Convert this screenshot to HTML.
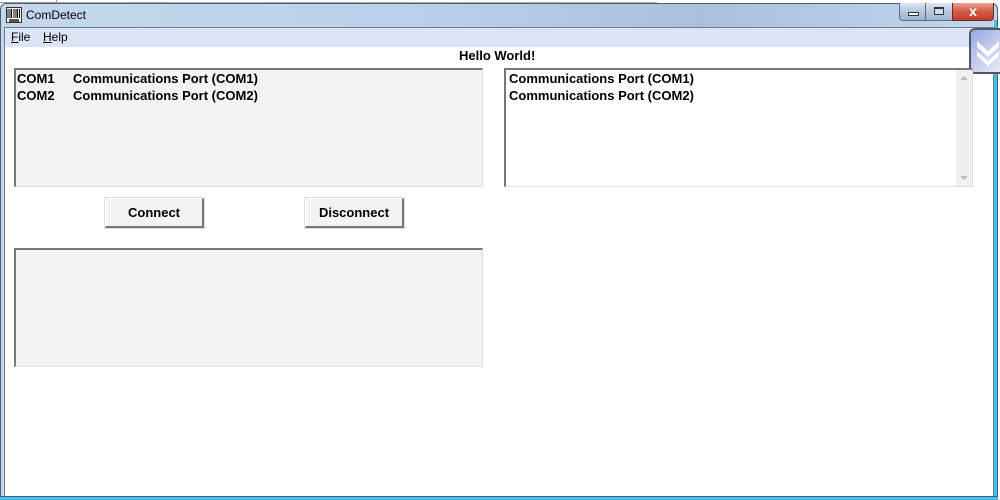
<!DOCTYPE html>
<html><head><meta charset="utf-8"><style>
*{margin:0;padding:0;box-sizing:border-box}
body{width:1000px;height:500px;overflow:hidden;background:#fff;position:relative;font-family:"Liberation Sans",Arial,sans-serif}
.abs{position:absolute}
.b{font-weight:bold;font-size:13px;color:#000}
</style></head><body>
<div class="abs" style="left:0;top:0;width:1000px;height:4px;background:#fff"></div>
<div class="abs" style="left:0;top:0;width:57px;height:3px;border-right:1px solid #999;border-bottom:1px solid #999"></div>
<div class="abs" style="left:57px;top:0;width:600px;height:3px;border-bottom:1px solid #aaa"></div>
<div class="abs" style="left:0;top:3px;width:998px;height:497px;background:linear-gradient(90deg,#c4d7ec,#bcd2ea 40%,#a9c1dc 70%,#c2d6ec);border:1px solid #4e5e70;border-radius:6px 6px 0 0"></div>
<div class="abs" style="left:994px;top:20px;width:3px;height:480px;background:#3cc3ec"></div>
<div class="abs" style="left:0;top:496px;width:998px;height:4px;background:#3cc3ec;border-top:1px solid #556"></div>
<svg class="abs" style="left:6px;top:7px" width="16" height="16" viewBox="0 0 16 16"><rect x="0.5" y="0.5" width="15" height="15" fill="#fff" stroke="#333"/><g stroke="#000"><path d="M2 2v9M4 2v9M5.5 2v9M8 2v9M10 2v9M11.5 2v9M13.5 2v9"/></g><rect x="3" y="12" width="10" height="3" fill="#555"/></svg>
<div class="abs" style="left:26px;top:8px;font-size:12px;color:#000">ComDetect</div>
<div class="abs" style="left:899px;top:3px;width:54px;height:18px;border:1px solid #5a6a80;border-top:none;border-radius:0 0 0 4px;background:linear-gradient(#dce6f2,#b6c8de 50%,#9fb5d0)"></div>
<div class="abs" style="left:925px;top:3px;width:1px;height:18px;background:#5a6a80"></div>
<div class="abs" style="left:908px;top:12px;width:11px;height:4px;border:1px solid #334;background:#fff"></div>
<div class="abs" style="left:934px;top:7px;width:10px;height:8px;border:1px solid #334;border-top-width:2px;background:#cde"></div>
<div class="abs" style="left:952px;top:3px;width:42px;height:18px;border:1px solid #6a2a20;border-top:none;border-radius:0 0 4px 0;background:linear-gradient(#e8a090,#d25a44 50%,#c0402a);color:#fff;font-weight:bold;font-size:14px;text-align:center;line-height:16px">x</div>
<div class="abs" style="left:4px;top:27px;width:990px;height:469px;background:#fff;border:1px solid #6e7c8c;border-bottom:none"></div>
<div class="abs" style="left:5px;top:28px;width:989px;height:19px;background:#dce5f5"></div>
<div class="abs" style="left:11px;top:30px;font-size:12px"><u>F</u>ile</div>
<div class="abs" style="left:43px;top:30px;font-size:12px"><u>H</u>elp</div>
<div class="abs" style="left:969px;top:28px;width:31px;height:46px;border:2px solid #556;border-right:none;border-radius:6px 0 0 6px;background:linear-gradient(135deg,#9aa8e0,#e8ecf8);"></div>
<svg class="abs" style="left:977px;top:37px" width="23" height="30"><path d="M0 4l11 10 11-10v6l-11 10-11-10z M0 14l11 10 11-10v5l-11 10-11-10z" fill="#fff" opacity=".9"/></svg>
<div class="abs b" style="left:459px;top:48px">Hello World!</div>
<div class="abs" style="left:14px;top:68px;width:469px;height:119px;background:#f3f3f3;border:1px solid #e0e0e0;border-top:2px solid #777;border-left:2px solid #777"></div>
<div class="abs b" style="left:17px;top:71px;line-height:16.5px">COM1<br>COM2</div>
<div class="abs b" style="left:73px;top:71px;line-height:16.5px">Communications Port (COM1)<br>Communications Port (COM2)</div>
<div class="abs" style="left:504px;top:68px;width:469px;height:119px;background:#fff;border:1px solid #e0e0e0;border-top:2px solid #777;border-left:2px solid #777"></div>
<div class="abs" style="left:956px;top:70px;width:16px;height:116px;background:#f0f0f0"></div>
<div class="abs" style="left:960px;top:76px;width:0;height:0;border:4px solid transparent;border-bottom-color:#bbb;border-top:none"></div>
<div class="abs" style="left:960px;top:176px;width:0;height:0;border:4px solid transparent;border-top-color:#bbb;border-bottom:none"></div>
<div class="abs b" style="left:509px;top:71px;line-height:16.5px">Communications Port (COM1)<br>Communications Port (COM2)</div>
<div class="abs b" style="left:105px;top:198px;width:99px;height:30px;background:#f3f3f3;border:1px solid #fff;border-right:2px solid #777;border-bottom:2px solid #777;text-align:center;line-height:27px;outline:1px solid #ddd">Connect</div>
<div class="abs b" style="left:305px;top:198px;width:99px;height:30px;background:#f3f3f3;border:1px solid #fff;border-right:2px solid #777;border-bottom:2px solid #777;text-align:center;line-height:27px;outline:1px solid #ddd">Disconnect</div>
<div class="abs" style="left:14px;top:248px;width:469px;height:119px;background:#f3f3f3;border:1px solid #e0e0e0;border-top:2px solid #777;border-left:2px solid #777"></div>
</body></html>
